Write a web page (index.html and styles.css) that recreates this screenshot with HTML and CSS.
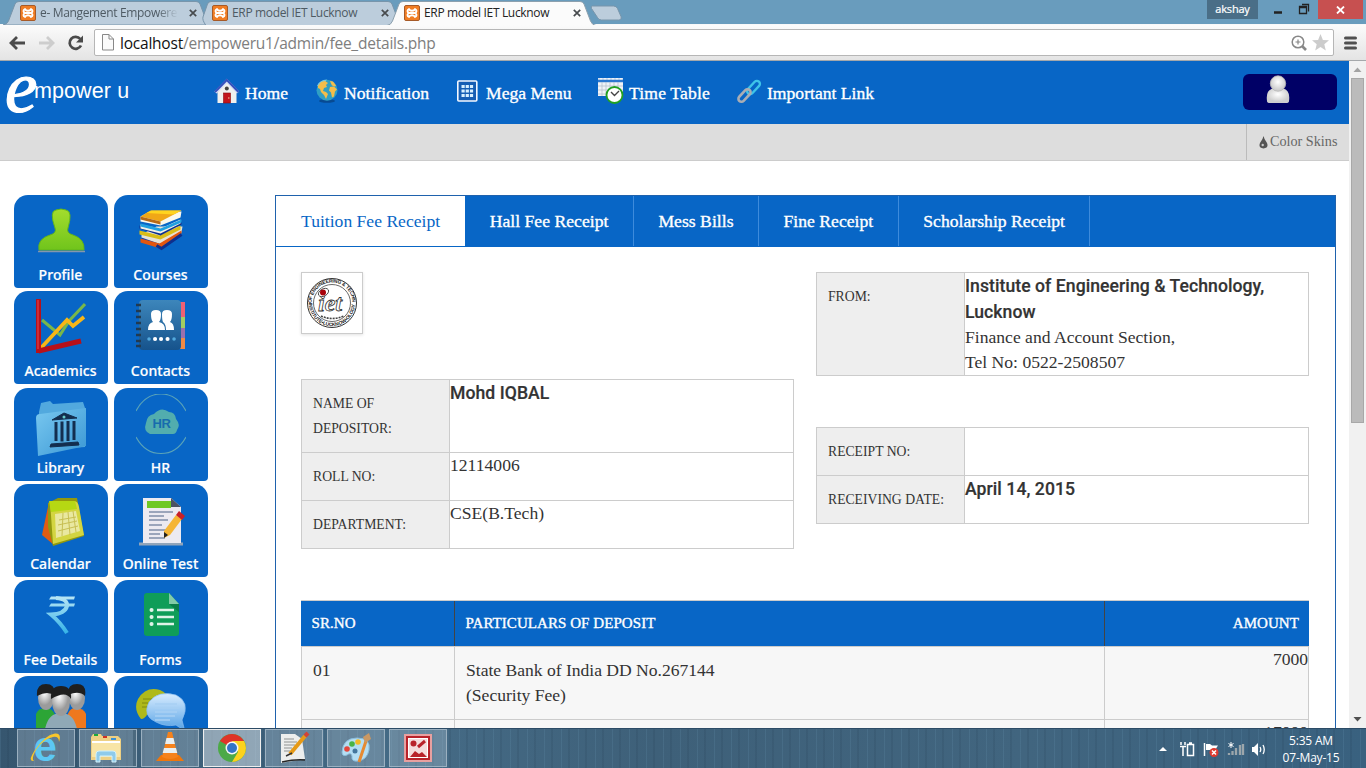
FILE: index.html
```html
<!DOCTYPE html>
<html lang="en">
<head>
<meta charset="utf-8">
<title>ERP model IET Lucknow</title>
<link rel="stylesheet" href="styles.css">
</head>
<body>
<svg class="defs" width="0" height="0" aria-hidden="true">
  <defs>
    <symbol id="fav" viewBox="0 0 16 16"><rect x=".5" y=".5" width="15" height="15" rx="1.500" fill="#f07d24" stroke="#a65a28"/><path d="M5 4c-2 1-2 3 0 4-2 1-2 3 0 4M11 4c2 1 2 3 0 4 2 1 2 3 0 4M5 4.500q3 2.500 6 0M5 11.500q3-2.500 6 0M5.500 8h5" fill="none" stroke="#fff" stroke-width="1.900" stroke-linecap="round"/></symbol>
    <symbol id="x" viewBox="0 0 8 8"><path d="M.8.8l6.400 6.400M7.200.8L.8 7.200" stroke="#474b4e" stroke-width="1.700"/></symbol>
    <linearGradient id="green" x2="0" y2="1"><stop stop-color="#a4dd2d"/><stop offset="1" stop-color="#70c41c"/></linearGradient>
    <linearGradient id="folder" x2="1" y2="1"><stop stop-color="#79c8f0"/><stop offset="1" stop-color="#3a97d4"/></linearGradient>
    <linearGradient id="ice" x1="0" y1="12" x2="0" y2="47" gradientUnits="userSpaceOnUse"><stop stop-color="#b4e4f4"/><stop offset="1" stop-color="#35b3e8"/></linearGradient>
    <linearGradient id="book" x2="0" y2="1"><stop stop-color="#3d86bb"/><stop offset="1" stop-color="#16538c"/></linearGradient>
    <linearGradient id="bubble" x2="0" y2="1"><stop stop-color="#d8ecff"/><stop offset="1" stop-color="#5ba5e6"/></linearGradient>
    <radialGradient id="skin" cx=".4" cy=".3"><stop stop-color="#fff"/><stop offset="1" stop-color="#9b9b9b"/></radialGradient>
    <radialGradient id="user" cx=".5" cy=".4"><stop stop-color="#fff"/><stop offset="1" stop-color="#cfcfcf"/></radialGradient>
  </defs>
</svg>

<div class="tabstrip">
  <svg class="tab-shapes" width="640" height="25" viewBox="0 0 640 25">
    <path d="M3 25Q7 24.500 8.500 21L15 4Q16 1.500 19 1.500H196Q199 1.500 200 4L206.500 21Q208 24.500 211 25Z" fill="#bccddc" stroke="#7895ab"/>
    <path d="M206 25.500Q202 20 203 17L207.500 4Q208.500 1.500 211 1.500H388Q391 1.500 392 4L398.500 21Q400 24.500 403 25.500Z" fill="#bccddc" stroke="#7895ab"/>
    <path d="M387 25.500Q391 25 392.500 21L399 4Q400 1.500 403 1.500H580Q583 1.500 584 4L590.500 21Q592 25 596 25.500Z" fill="#fbfbfb" stroke="#8ca0ae"/>
    <path d="M592 6.500H613Q616 6.500 617 9L620.500 17Q621.500 20.500 618 20.500H601Q598 20.500 597 18L591 9Q590 6.500 592 6.500Z" transform="translate(.5 -.500)" fill="#bccddc" stroke="#7895ab"/>
  </svg>
  <div class="tab"><svg width="16" height="16"><use href="#fav"/></svg><span class="tt fade">e- Mangement Empowere</span><svg width="8" height="8"><use href="#x"/></svg></div>
  <div class="tab"><svg width="16" height="16"><use href="#fav"/></svg><span class="tt">ERP model IET Lucknow</span><svg width="8" height="8"><use href="#x"/></svg></div>
  <div class="tab on"><svg width="16" height="16"><use href="#fav"/></svg><span class="tt">ERP model IET Lucknow</span><svg width="8" height="8"><use href="#x"/></svg></div>
  <div class="wincontrols">
    <span class="who">akshay</span>
    <svg width="60" height="19" viewBox="0 0 60 19"><path d="M16 12.500h8" stroke="#222" stroke-width="2.500"/><path d="M41.500 6.500h7v7h-7zM41 7.500h8M44 4.500h6.500v7" fill="none" stroke="#222" stroke-width="1.300"/></svg>
    <span class="winclose"><svg width="9" height="8" viewBox="0 0 9 8"><path d="M1 .5l7 7M8 .5l-7 7" stroke="#fff" stroke-width="1.800"/></svg></span>
  </div>
</div>

<div class="toolbar">
  <svg width="84" height="36" viewBox="0 0 84 36">
    <path d="M11.500 18h13.500M17 12l-6 6 6 6" fill="none" stroke="#4a4a4a" stroke-width="2.800"/>
    <path d="M39 18h13M47 12l6 6-6 6" fill="none" stroke="#cdcdcd" stroke-width="2.800"/>
    <path d="M80.300 14A6 6 0 1 0 81 20.500" fill="none" stroke="#4a4a4a" stroke-width="2.700"/><path d="M83 10.500v7h-7z" fill="#4a4a4a"/>
  </svg>
  <div class="omnibox">
    <svg width="12" height="17" viewBox="0 0 12 17"><path d="M.5.5h6.500l4.500 4.500v11H.5zM7 .5V5h4.500" fill="#fafafa" stroke="#888"/></svg>
    <span class="url"><b>localhost</b>/empoweru1/admin/fee_details.php</span>
    <svg width="16" height="16" viewBox="0 0 16 16"><circle cx="7" cy="7" r="5.800" fill="none" stroke="#888" stroke-width="1.500"/><path d="M4.500 7h5M7 4.500v5" stroke="#888" stroke-width="1.200"/><path d="M11 11l4 4" stroke="#888" stroke-width="2.600"/></svg>
    <svg class="star" width="17" height="17" viewBox="0 0 17 17"><path d="M8.500 0l2.400 5.900 6.100.4-4.700 4 1.500 6.200-5.300-3.400-5.300 3.400 1.500-6.200L0 6.300l6.100-.4z" fill="#ccc"/></svg>
  </div>
  <svg class="burger" width="13" height="14" viewBox="0 0 13 14"><path d="M1.500 2h10M1.500 7h10M1.500 12h10" stroke="#505050" stroke-width="3" stroke-linecap="round"/></svg>
</div>

<div class="viewport">
  <main class="page">
    <header class="head">
      <div class="brand"><span class="brand-e">e</span><span class="brand-t">mpower u</span></div>
      <nav class="nav">
        <a><svg width="26" height="26" viewBox="0 0 26 26"><path d="M3.500 14v11h19V13L13 3z" fill="#f0f0ee"/><path d="M1.500 14.500L12.800 3 24 14.500" fill="none" stroke="#d5dcf2" stroke-width="3.200"/><path d="M1 14L12.800 2 24.500 14" fill="none" stroke="#3450bd" stroke-width="2"/><circle cx="12.800" cy="10.500" r="2" fill="#444"/><rect x="9.500" y="15" width="7" height="10" fill="#c3151c" stroke="#8c0c10" stroke-width=".6"/><path d="M14 20h1.500" stroke="#f0d0a0"/></svg><span>Home</span></a>
        <a><svg width="26" height="26" viewBox="0 0 26 26"><ellipse cx="12" cy="23" rx="8" ry="1.800" fill="#074a92"/><circle cx="12" cy="12.200" r="10.500" fill="#2f9fc4"/><path d="M2 8Q4 2 12 1.500Q8 9 2 8z" fill="#76c8dc"/><path d="M3 8l3-4 4-1 3 2-2 2 1 2-3 1-1 3 3 1 2 2-2 5-2-4-3-3-1-3-2-1zM15 3l3 .5 3 4-1 1-3-1-1-2zM15 9l4-.5 3 3-2 2-1 5-2 1-1-5-2-2z" fill="#f3bd4a"/></svg><span>Notification</span></a>
        <a><svg width="26" height="26" viewBox="0 0 26 26"><rect x="1.800" y="3" width="19" height="20" rx="1" fill="#165eb4" stroke="#f4f8ff" stroke-width="1.600"/><path d="M5.500 7h3.200v3H5.500zm4.200 0h3.200v3H9.700zm4.200 0h3.200v3h-3.200zM5.500 11.500h3.200v3H5.500zm4.200 0h3.200v3H9.700zm4.200 0h3.200v3h-3.200zM5.500 16h3.200v3H5.500zm4.200 0h3.200v3H9.700zm4.200 0h3.200v3h-3.200z" fill="#d8f0ff"/></svg><span>Mega Menu</span></a>
        <a><svg width="26" height="26" viewBox="0 0 26 26"><path d="M0 0h25v18H0z" fill="#f0f3f7"/><path d="M0 1h25" stroke="#b8cdec" stroke-width="1" stroke-dasharray="2 2"/><path d="M0 3h25" stroke="#2c78cf" stroke-width="2.500"/><path d="M0 8h25M0 12h25M0 16h25M4 4v14M8 4v14M12 4v14M16 4v14M20 4v14" stroke="#b2bbc9" stroke-width=".7"/><circle cx="16.500" cy="17" r="8" fill="#fff" stroke="#21a121" stroke-width="1.800"/><path d="M13 14l3.500 3.500 4.500-4.500" fill="none" stroke="#444" stroke-width="1.400"/></svg><span>Time Table</span></a>
        <a><svg width="26" height="26" viewBox="0 0 26 26"><rect x="-8" y="-3" width="16" height="6" rx="3" transform="translate(16.500 9.500) rotate(-47)" fill="none" stroke="#3fc4e8" stroke-width="2.400"/><rect x="-7.500" y="-3" width="15" height="6" rx="3" transform="translate(7.500 17.500) rotate(-47)" fill="none" stroke="#a9adb4" stroke-width="2.600"/></svg><span>Important Link</span></a>
      </nav>
      <div class="userbox"><svg width="26" height="30" viewBox="0 0 26 30"><path d="M2 26Q.5 15 8 13.500h10Q25.500 15 24 26Q24 28 21 28H5Q2 28 2 26z" fill="url(#user)"/><circle cx="13" cy="8.500" r="7.700" fill="url(#user)" stroke="#b5b5b5" stroke-width=".8"/></svg></div>
    </header>
    <div class="subbar"><span class="skins"><svg width="9" height="13" viewBox="0 0 9 13"><path d="M4.500 0Q5 3 8 7Q10 12 4.500 12.500Q-1 12 1 7Q4 3 4.500 0z" fill="#555"/><circle cx="3.700" cy="9" r="1.200" fill="#ccc"/></svg>Color Skins</span></div>

    <div class="content">
      <aside class="tiles">
        <a class="tile"><svg viewBox="0 0 50 62"><path d="M3 49Q1 38 14 34Q21 32 19 27Q13 10 20 9Q25 7 30 9Q37 10 32 27Q30 32 37 34Q49 38 48 49z" fill="url(#green)" stroke="#62b51b"/><path d="M2 50.500h47" stroke="#8596ad" stroke-width="1.500"/></svg><span>Profile</span></a>
        <a class="tile"><svg viewBox="0 0 50 62"><g transform="translate(-1.500 3.500)"><path d="M7 34l14-8 27 5-20 13z" fill="#123ba8"/><path d="M7 30l15-8 26 0-1 6-20 12-20-7z" fill="#e6e2d5"/><path d="M6 34l19 5 22-13v3L26 44 6 38z" fill="#e3560f"/><path d="M5 26l20 5 21-10v4L26 35 5 30z" fill="#d9bd18"/><path d="M5 21l21 7 21-11v3L26 31 5 24z" fill="#0e2f8d"/><path d="M6 20l20 4 20-9v4L26 29 6 24z" fill="#f3f1e6"/><path d="M6 19l20 5 21-9 0 3-21 9-20-5z" fill="#20a0e0"/><path d="M6 12l9-5 32 0-1 6-20 8-20-4z" fill="#faf8ed"/><path d="M6 12l10-6h31L26 17z" fill="#f0a717"/><path d="M12 8.500L17 6h30l-8 4z" fill="#ffd41f"/><path d="M6 12l20 5v3L6 15z" fill="#b86a14"/><path d="M22 41l5 3 20-14" fill="none" stroke="#0e2f8d" stroke-width="3"/></g></svg><span>Courses</span></a>
        <a class="tile"><svg viewBox="0 0 50 62"><path d="M6 23l18 15 9-14L49 7" fill="none" stroke="#78b74a" stroke-width="3"/><path d="M4 52L31 23l6 6 11-9" fill="none" stroke="#f8b617" stroke-width="3.800"/><path d="M2.500 2v54M2.500 54L45 44" fill="none" stroke="#b7101a" stroke-width="5"/><path d="M2 3v49" stroke="#e0404a" stroke-width="1.200"/></svg><span>Academics</span></a>
        <a class="tile"><svg viewBox="0 0 50 62"><rect x="42" y="5" width="7" height="16" fill="#ee6074"/><rect x="42" y="20" width="7" height="11" fill="#a2ce62"/><rect x="42" y="31" width="7" height="10" fill="#9b70ad"/><rect x="42" y="41" width="7" height="11" fill="#ee8a45"/><rect x="3" y="3" width="42" height="50" rx="4" fill="url(#book)"/><path d="M0 8h5M0 14h5M0 20h5M0 26h5M0 32h5M0 38h5M0 44h5M0 49h5" stroke="#223a50" stroke-width="2.600"/><path d="M15 17q0-4 5-4t5 4q0 6-2 8 6 1 6 8H12q0-7 5-8-2-2-2-8z" fill="#fff"/><path d="M26 17q0-4 5-4t5 4q0 6-2 8 4 1 4 8h-8q0-6-3-8-1-2-1-8z" fill="#fff"/><path d="M19 42h.1M25 42h.1M31.500 42h.1" stroke="#fff" stroke-width="4" stroke-linecap="round"/><path d="M13 42h.1M38 42h.1" stroke="#53a9dd" stroke-width="3.500" stroke-linecap="round"/></svg><span>Contacts</span></a>
        <a class="tile"><svg viewBox="0 0 50 62"><path d="M3 18L5 9l9-2 3 3 30-2 2 6v39L3 56z" fill="#52a9de"/><path d="M0 24q0-4 4-4L50 14v38L2 62z" fill="url(#folder)"/><g fill="#132e4f" stroke="#132e4f"><path d="M16 26L28 19l13 5zM15 50l27-2 1 3-29 2z"/><path d="M20 28v19M26 27.500v20M32 27v20M38 27v19" stroke-width="3"/></g><circle cx="28" cy="23" r="1.500" fill="#6cc"/></svg><span>Library</span></a>
        <a class="tile"><svg viewBox="0 0 50 62"><path d="M0 17Q9 0 25 0T50 17M0 43Q9 59.500 25 59.500T50 43" fill="none" stroke="#5aa3b8" stroke-width="1.200"/><path d="M14 40Q7 37 10 29Q11 21 18 20Q25 12 33 18Q39 18 40 25Q45 31 41 36Q40 40 37 40z" fill="#52adae"/><text x="25.500" y="34" class="hr">HR</text></svg><span>HR</span></a>
        <a class="tile"><svg viewBox="0 0 50 62"><path d="M13 12L6 45l12 10 6-4z" fill="#e05c12"/><path d="M12 13l10-5 19 0 7 38-31 10-5-19z" fill="#92980e"/><path d="M14 11h24q4 0 5 6l5 28-31 9z" fill="#d3d541"/><path d="M19 24l21-3 4 20-24 7z" fill="#e9e8a0"/><path d="M13 11h26l2 8-26 3z" fill="#b6d813"/><path d="M23 30l17-3M22 35l19-4M22 41l20-5M27 23l-1 23M32 22l2 23M37 21l3 21" stroke="#c8bf53"/></svg><span>Calendar</span></a>
        <a class="tile"><svg viewBox="0 0 50 62"><path d="M3 54h44" stroke="#91a4ba" stroke-width="3"/><path d="M7 8h28l10 9v36H7z" fill="#eceaf1"/><path d="M35 8l10 9H35z" fill="#4c5363"/><path d="M11 11h24v7H11z" fill="#6fc825"/><path d="M13 22h24M13 26h15M13 30h19M13 35h13M13 40h17M13 44h11M13 48h16" stroke="#9ba5bb" stroke-width="1.800"/><path d="M28 41L40 25l6 4-12 16-6 3z" fill="#f5b536"/><path d="M40 25l3-4 6 5-3 4z" fill="#c82028"/><path d="M28 42l4 3-4 3z" fill="#222"/></svg><span>Online Test</span></a>
        <a class="tile"><svg viewBox="0 0 50 62"><path d="M15 10.500h24l-1 3H13zM15 17.500h24l-1 3H13z" fill="url(#ice)"/><path d="M20 12Q32 13 31 20Q29 28 15 28.500Q24 36 31 47" fill="none" stroke="url(#ice)" stroke-width="4"/></svg><span>Fee Details</span></a>
        <a class="tile"><svg viewBox="0 0 50 62"><path d="M11 7h22l10 11v29q0 3-3 3H11q-3 0-3-3V10q0-3 3-3z" fill="#0f9d58"/><path d="M33 18h10v8z" fill="#0b7c48"/><path d="M33 7l10 11H33z" fill="#82cba8"/><path d="M21 24h17M21 31h17M21 38h17" stroke="#dff3e8" stroke-width="2.400"/><path d="M15.500 24h.1M15.500 31h.1M15.500 38h.1" stroke="#dff3e8" stroke-width="4" stroke-linecap="round"/></svg><span>Forms</span></a>
        <a class="tile"><svg viewBox="0 0 50 62"><path d="M0 54V32q2-6 10-6 12 0 12 28z" fill="#2ca536"/><path d="M29 54q0-28 10-28 9 0 11 6v22z" fill="#ef781e"/><ellipse cx="10" cy="16" rx="8" ry="12" fill="url(#skin)"/><ellipse cx="41" cy="16" rx="8" ry="12" fill="url(#skin)"/><path d="M1 14Q0 2 10 2t9 12Q12 8 1 14zM32 13Q31 2 41 2t8 12Q43 8 32 13z" fill="#1f1f1f"/><path d="M8 56q1-25 17-25t17 25z" fill="#8fa9b6"/><ellipse cx="25" cy="20" rx="9" ry="14" fill="url(#skin)"/><path d="M15 17Q14 4 25 4t10 13Q30 8 15 17z" fill="#1f1f1f"/></svg><span>Alumni</span></a>
        <a class="tile"><svg viewBox="0 0 50 62"><path d="M5 37Q-3 27 2 17Q10 4 24 8q10 4 9 14-4 12-21 9Q9 37 5 37z" fill="#afb91a"/><path d="M7 17h14M6 21h12M6 25h10" stroke="#7f8a10"/><path d="M40 43q8 6 8 3l-2-8Q55 20 40 13 22 8 13 20 6 34 20 40q9 5 20 3z" fill="url(#bubble)" stroke="#8abdf0" stroke-width=".7"/><path d="M19 22h22M19 26h24M19 30h22M19 34h20M19 38h15" stroke="#a8d0f4" stroke-width="1.400"/></svg><span>Chat</span></a>
      </aside>

      <section class="panel">
        <div class="ptabs"><a class="on">Tuition Fee Receipt</a><a>Hall Fee Receipt</a><a>Mess Bills</a><a>Fine Receipt</a><a>Scholarship Receipt</a></div>
        <div class="pbody">
          <div class="cols">
            <div class="left">
              <div class="logo"><svg width="52" height="52" viewBox="0 0 52 52"><defs><path id="ringTop" d="M5.500 26a20.500 20.500 0 1 1 41 0"/><path id="ringBottom" d="M2.800 26a23.200 23.200 0 0 0 46.400 0"/></defs><circle cx="26" cy="26" r="24.500" fill="none" stroke="#333"/><circle cx="26" cy="26" r="18.500" fill="none" stroke="#444" stroke-width=".8"/><text class="ring"><textPath href="#ringTop" textLength="63">OF ENGINEERING &amp; TECHN</textPath></text><text class="ring"><textPath href="#ringBottom" textLength="71">INSTITUTE•LUCKNOW•OLOGY</textPath></text><path d="M15 39q11 5 23 0" fill="none" stroke="#444" stroke-width="1.600" stroke-dasharray="2 1"/><text class="iet" x="12" y="34">iet</text><ellipse cx="17.500" cy="15.500" rx="5.500" ry="3.600" transform="rotate(-30 17.500 15.500)" fill="#fff" stroke="#333" stroke-width=".8"/><circle cx="17" cy="15.500" r="3" fill="#a8040c"/></svg></div>
              <div class="info">
                <div class="row r73"><div class="k">NAME OF DEPOSITOR:</div><div class="v strong">Mohd IQBAL</div></div>
                <div class="row"><div class="k">ROLL NO:</div><div class="v">12114006</div></div>
                <div class="row"><div class="k">DEPARTMENT:</div><div class="v">CSE(B.Tech)</div></div>
              </div>
            </div>
            <div class="right">
              <div class="info">
                <div class="row r103"><div class="k">FROM:</div><div class="v"><div class="strong">Institute of Engineering &amp; Technology,<br>Lucknow</div>Finance and Account Section,<br>Tel No: 0522-2508507</div></div>
              </div>
              <div class="info second">
                <div class="row"><div class="k">RECEIPT NO:</div><div class="v"></div></div>
                <div class="row"><div class="k">RECEIVING DATE:</div><div class="v strong">April 14, 2015</div></div>
              </div>
            </div>
          </div>
          <div class="ledger">
            <div class="lr lh"><div>SR.NO</div><div>PARTICULARS OF DEPOSIT</div><div>AMOUNT</div></div>
            <div class="lr"><div>01</div><div>State Bank of India DD No.267144<br>(Security Fee)</div><div>7000</div></div>
            <div class="lr"><div>02</div><div>State Bank of India</div><div>17000</div></div>
          </div>
        </div>
      </section>
    </div>
  </main>
  <div class="scroll"><svg width="17" height="17" viewBox="0 0 17 17"><path d="M4.500 11l4-4.500 4 4.500z" fill="#a3a3a3"/></svg><div class="thumb"></div><svg class="down" width="17" height="17" viewBox="0 0 17 17"><path d="M4.500 6l4 4.500 4-4.500z" fill="#505050"/></svg></div>
</div>

<footer class="taskbar">
  <div class="apps">
    <span><svg width="34" height="34" viewBox="0 0 34 34"><text x="4.500" y="30" class="ie">e</text><path d="M5 30Q-2 31 6 19Q16 4 26 2.500q7-.5 4 8.500 0-6-6-5Q14 8 7 19 2 28 5 30z" fill="#f8c62b"/></svg></span>
    <span class="stack"><svg width="34" height="34" viewBox="0 0 34 34"><path d="M2 6l2-3h8l1 2h16l3 3v21H2z" fill="#eed083"/><path d="M3 10h28v16H3z" fill="#f8e5a6"/><path d="M5 4h4" stroke="#1ca83b" stroke-width="2"/><path d="M14 6h4" stroke="#cf3125" stroke-width="2"/><path d="M22 8h5" stroke="#3c91d5" stroke-width="2"/><path d="M3 11h28" stroke="#fff" stroke-width="2"/><path d="M7 31v-8q0-3 3-3h14q3 0 3 3v8h-4v-6H11v6z" fill="#8fcbea" stroke="#d2f1fb"/></svg></span>
    <span><svg width="34" height="34" viewBox="0 0 34 34"><path d="M8 24h18l5 6H3z" fill="#ee770d"/><path d="M15 1h4l6 25q-8 4-16 0z" fill="#f6821c"/><path d="M13.500 7h7l1.400 6h-9.800zM11 17h12l1.300 5H9.700z" fill="#e9eef0"/></svg></span>
    <span class="act"><svg width="34" height="34" viewBox="0 0 34 34"><circle cx="17" cy="17" r="14" fill="#4ca947"/><path d="M17 17L4.900 10A14 14 0 0 1 29.100 10z" fill="#df3429"/><path d="M17 10h12.100A14 14 0 0 1 17 31l6-10z" fill="#fcd21c"/><circle cx="17" cy="17" r="6.500" fill="#f6f6f6"/><circle cx="17" cy="17" r="5" fill="#3474c5"/></svg></span>
    <span><svg width="34" height="34" viewBox="0 0 34 34"><path d="M4 3h14l7 5 3 20-24 4z" fill="#eceeed"/><path d="M7 8h10M7 11h13M7 14h11M7 17h8M7 20h6" stroke="#adb1b0" stroke-width="1.400"/><path d="M5 31q14-3 23-2" stroke="#262626" stroke-width="1.500" fill="none"/><path d="M13 23L28 5" stroke="#e69a16" stroke-width="4"/><path d="M28 5l3-3" stroke="#d24335" stroke-width="4"/><path d="M9 25l6-3" stroke="#333" stroke-width="1.500"/></svg></span>
    <span><svg width="34" height="34" viewBox="0 0 34 34"><path d="M3 21Q4 7 18 7t12 12q-2 10-11 11-7 1-6-5-1-4-5-1-5 2-5-3z" fill="#b4def3" stroke="#8bbddb"/><circle cx="8" cy="18" r="2.800" fill="#e4473c"/><circle cx="13" cy="13" r="2.800" fill="#49b444"/><circle cx="19" cy="11" r="2.800" fill="#f2ba27"/><circle cx="16" cy="20" r="2.500" fill="#44779d"/><path d="M20 31l7-21" stroke="#e58a32" stroke-width="3"/><path d="M26 12l-2-6 6-4 2 6z" fill="#ca9863"/></svg></span>
    <span><svg width="34" height="34" viewBox="0 0 34 34"><rect x="3" y="3" width="28" height="28" fill="#b8222a"/><rect x="4" y="4" width="26" height="26" fill="none" stroke="#e8a0a0" stroke-width="2"/><rect x="7.500" y="7.500" width="19" height="19" fill="#f4dcdc" stroke="#fff"/><circle cx="12.500" cy="12.500" r="3" fill="#b8222a"/><path d="M17 16l7-6" stroke="#b8222a" stroke-width="3"/><path d="M9 26l5-6 4 3 3-2 5 5z" fill="#b8222a"/></svg></span>
  </div>
  <div class="tray">
    <svg width="110" height="20" viewBox="0 0 110 20"><path d="M3 12l4-4 4 4z" fill="#fff"/><g fill="none" stroke="#fff" stroke-width="1.500"><path d="M25 3v3M29 3v3M24 7.500h6M27 8v9"/><path d="M31.500 5.500h6v11h-6zM33 4h3"/><path d="M48.500 4v13"/></g><path d="M50 5h4l2 1.500h6l-2 3 2 3h-6l-2-1.500h-4z" fill="#fff"/><circle cx="58" cy="13.500" r="4.500" fill="#dc3a30"/><path d="M56 11.500l4 4M60 11.500l-4 4" stroke="#fff" stroke-width="1.500"/><path d="M73 16v-2M76.500 16v-4M80 16v-7M84 16V6M87 16V5" stroke="#9ca6ab" stroke-width="2.300"/><path d="M75 3v6M72.500 4.500l5 3M77.500 4.500l-5 3" stroke="#fff"/><path d="M96 8h2l4-4v13l-4-4h-2z" fill="#fff"/><path d="M104 8q1.500 2.500 0 5M107 6q2.500 4.500 0 9" fill="none" stroke="#fff" stroke-width="1.300"/></svg>
    <div class="clock"><div>5:35 AM</div><div>07-May-15</div></div>
  </div>
</footer>
</body>
</html>
```
FILE: styles.css
```css
* { box-sizing: border-box; }
html, body { margin: 0; height: 768px; overflow: hidden; }
body {
  display: flex;
  flex-direction: column;
  width: 1366px;
  background: #fff;
  color: #333;
  font: 17.6px/25px "Liberation Serif", serif;
}
svg { display: block; flex: none; }
.defs { position: absolute; }

/* browser tab strip */
.tabstrip {
  position: relative;
  flex: none;
  display: flex;
  height: 24px;
  padding-left: 20px;
  background: #699cbd;
  font: 12px/16px "Open Sans", sans-serif;
  color: #4e5a63;
}
.tab-shapes { position: absolute; left: 0; top: 0; }
.tab { position: relative; display: flex; flex: none; align-items: center; width: 192px; height: 26px; }
.tab.on { color: #222; }
.tt { width: 138px; margin: 0 11px 0 4px; white-space: nowrap; overflow: hidden; letter-spacing: -.34px; }
.fade { -webkit-mask-image: linear-gradient(90deg, #000 85%, transparent); mask-image: linear-gradient(90deg, #000 85%, transparent); }
.wincontrols { display: flex; height: 19px; margin-left: auto; padding-right: 3px; }
.who { width: 51px; height: 19px; background: #4a6e87; color: #fff; text-align: center; line-height: 18px; font-size: 11px; letter-spacing: -.2px; -webkit-text-stroke: .2px #fff; }
.winclose { display: flex; align-items: center; justify-content: center; width: 45px; height: 19px; background: #c75050; }

/* address bar */
.toolbar {
  flex: none;
  display: flex;
  align-items: center;
  height: 37px;
  padding-right: 9px;
  border-top: 1px solid #f8f8f8;
  border-bottom: 1px solid #a5a8ab;
  background: linear-gradient(#fbfbfb, #e4e4e4);
}
.omnibox {
  flex: 1;
  display: flex;
  align-items: center;
  height: 27px;
  margin-left: 10px;
  padding: 0 4px 0 7px;
  background: #fff;
  border: 1px solid #b6b6b6;
  border-radius: 2px;
}
.url { flex: 1; margin-left: 6px; font: 15.5px/22px "Open Sans", sans-serif; letter-spacing: -.22px; color: #7e7e7e; white-space: nowrap; }
.url b { font-weight: 400; color: #111; }
.star { margin-left: 5px; }
.burger { margin-left: 10px; }

.viewport { flex: none; display: flex; height: 667px; overflow: hidden; }
.page { width: 1349px; background: #fff; overflow: hidden; }
.head { display: flex; height: 63px; background: #0866c6; }
.brand { display: flex; width: 214px; color: #fff; font-family: "Liberation Sans", sans-serif; }
.brand-e { width: 29px; margin-left: 5px; font: italic 73px/63px "Liberation Serif", serif; -webkit-text-stroke: 1.2px #fff; transform: translateY(-5px); }
.brand-t { font-size: 21.5px; line-height: 61px; letter-spacing: .1px; white-space: nowrap; }
.nav { display: grid; grid-template-columns: 101px 141px 142px 139px 150px; }
.nav a { display: flex; align-items: flex-start; padding-top: 17px; gap: 5px; color: #fff; -webkit-text-stroke: .35px #fff; white-space: nowrap; }
.nav a:nth-child(2) { gap: 3px; }
.nav a:nth-child(3) { gap: 4px; }
.nav a:nth-child(4) { letter-spacing: .15px; }
.nav a:nth-child(5) { gap: 4px; }
.nav span { padding-top: 3px; }
.userbox { width: 94px; height: 36px; margin: 13px 12px 0 auto; padding: 1px 0 0 22px; border-radius: 6px; background: #000066; }
.subbar { display: flex; justify-content: flex-end; height: 37px; background: #ddd; border-bottom: 1px solid #ccc; }
.skins { display: flex; align-items: center; gap: 2px; width: 103px; padding: 0 0 2px 12px; border-left: 1px solid #bbb; font-size: 14.2px; color: #666; white-space: nowrap; }
.skins svg { margin-top: 3px; }

.content { display: flex; padding: 34px 13px 0 14px; }
.tiles { display: grid; grid-template-columns: 94px 94px; grid-auto-rows: 93px; gap: 3.25px 6px; align-content: start; width: 194px; margin-right: 67px; }
.tile {
  display: flex;
  flex-direction: column;
  align-items: center;
  background: #0866c6;
  border-radius: 14px 14px 4px 4px;
  color: #fff;
  font: 500 14px/20px "Noto Sans", sans-serif;
  letter-spacing: .08px;
  -webkit-text-stroke: .2px #fff;
  white-space: nowrap;
}
.tile svg { width: 50px; height: 62px; margin: 6px 0 2px; -webkit-text-stroke: 0; }
.tile > span { margin-left: -1px; }
.hr { font: bold 13px "Liberation Sans", sans-serif; letter-spacing: -.5px; fill: #176cad; text-anchor: middle; }

.panel { width: 1061px; height: 800px; border: 1px solid #0866c6; border-color: #1f62ad; }
.ptabs { display: flex; height: 51px; background: #0866c6; border-bottom: 1px solid #0866c6; }
.ptabs a { padding: 13px 24.4px 0 24.6px; border-right: 1px solid #3d8bdc; color: #fff; letter-spacing: .03px; -webkit-text-stroke: .35px #fff; white-space: nowrap; }
.ptabs .on { padding: 13px 25px 0; background: #fff; color: #0866c6; letter-spacing: 0; -webkit-text-stroke: 0; border: 0; }
.pbody { padding: 25px 26px 0 25px; }
.cols { display: flex; justify-content: space-between; height: 328px; }
.left, .right { width: 493px; }
.logo { display: flex; align-items: center; justify-content: center; width: 62px; height: 62px; margin-bottom: 45px; border: 1px solid #ccc; box-shadow: 0 1px 3px rgba(0,0,0,.12); }
.ring { font: bold 5px "Liberation Sans", sans-serif; fill: #222; }
.iet { font: italic bold 24px "Liberation Serif", serif; fill: #fff; stroke: #333; stroke-width: .8px; }
.info { border: 1px solid #ccc; border-bottom: 0; }
.row { display: grid; grid-template-columns: 148px 1fr; height: 48px; border-bottom: 1px solid #ccc; }
.r73 { height: 73px; }
.r103 { height: 103px; }
.k { padding: 11px 20px 0 11px; border-right: 1px solid #ccc; background: #eee; font-size: 13.7px; }
.row:not(.r73) .k { padding-right: 0; white-space: nowrap; }
.strong { font-family: Roboto, sans-serif; font-weight: 500; line-height: 26px; letter-spacing: .06px; -webkit-text-stroke: .2px #333; }
.second { margin-top: 51px; }
.ledger { border: 1px solid #ccc; }
.lr { display: grid; grid-template-columns: 153px 650px 1fr; height: 73px; background: #f7f7f7; border-bottom: 1px solid #ccc; }
.lr > div { padding: 11px 0 0 11px; border-right: 1px solid #ccc; letter-spacing: -.02px; }
.lr > div:last-child { padding: 0; text-align: right; border-right: 0; }
.lr.lh { height: 46px; margin: 0 -1px; grid-template-columns: 154px 650px 1fr; background: #0866c6; color: #fff; font-size: 15px; -webkit-text-stroke: .35px #fff; }
.lr.lh > div { padding: 10px 0 0 10.500px; border-color: #444; letter-spacing: .06px; }
.lr.lh > div:last-child { padding: 10px 10px 0 0; }

.scroll { display: flex; flex-direction: column; align-items: center; width: 17px; background: #f1f1f1; }
.thumb { width: 13px; height: 345px; background: #bbb; border: 1px solid #a8a8a8; }
.down { margin-top: auto; }

/* desktop taskbar */
.taskbar {
  flex: none;
  display: flex;
  justify-content: space-between;
  height: 40px;
  padding: 0 25px 0 17px;
  color: #fff;
  border-top: 1px solid #2c4b66;
  background:
    repeating-linear-gradient(90deg, rgba(120,170,200,.14) 0 1px, transparent 1px 7px, rgba(20,40,60,.1) 7px 9px, transparent 9px 17px),
    linear-gradient(90deg, #36566f, #456b86 30%, #3e6079 48%, #41657f 75%, #39617f);
  font: 12px/17px "Open Sans", sans-serif;
}
.apps { display: flex; gap: 4px; }
.apps span { display: flex; align-items: center; justify-content: center; width: 58px; height: 38px; background: rgba(190,205,220,.3); border: 1px solid #9bb0c0; }
.apps .stack { padding-right: 4px; box-shadow: inset -4px 0 0 -1px rgba(60,90,112,.6); }
.apps .act { background: rgba(225,233,240,.5); border-color: #eee; }
.ie { font: bold 42px "Liberation Sans", sans-serif; fill: #5cc8f4; }
.tray { display: flex; align-items: center; gap: 15px; }
.clock { width: 60px; text-align: center; letter-spacing: -.2px; white-space: nowrap; }
```
